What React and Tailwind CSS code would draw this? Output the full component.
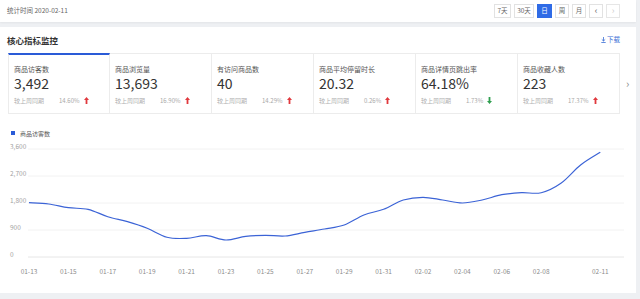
import React from 'react';

const metrics = [
  { label: '商品访客数', value: '3,492', rate: '14.60%', up: true, active: true },
  { label: '商品浏览量', value: '13,693', rate: '16.90%', up: true },
  { label: '有访问商品数', value: '40', rate: '14.29%', up: true },
  { label: '商品平均停留时长', value: '20.32', rate: '0.26%', up: true },
  { label: '商品详情页跳出率', value: '64.18%', rate: '1.73%', up: false },
  { label: '商品收藏人数', value: '223', rate: '17.37%', up: true },
];

const visitors = [
  1810, 1767, 1643, 1590, 1343, 1177, 957, 657, 623, 710, 567, 690, 723, 700, 823,
  933, 1067, 1400, 1590, 1900, 1990, 1900, 1800, 1900, 2077, 2143, 2143, 2457, 3067, 3492,
];

const xLabels = [
  [0, '01-13'], [2, '01-15'], [4, '01-17'], [6, '01-19'], [8, '01-21'], [10, '01-23'],
  [12, '01-25'], [14, '01-27'], [16, '01-29'], [18, '01-31'], [20, '02-02'], [22, '02-04'],
  [24, '02-06'], [26, '02-08'], [29, '02-11'],
];

const Arrow = ({ up }) => (
  <svg width="5" height="7" viewBox="0 0 5 7" className="ml-[4px]">
    {up ? (
      <path d="M2.5 0 L5 3 L3.4 3 L3.4 7 L1.6 7 L1.6 3 L0 3 Z" fill="#e0393e" />
    ) : (
      <path d="M2.5 7 L5 4 L3.4 4 L3.4 0 L1.6 0 L1.6 4 L0 4 Z" fill="#2f9e4f" />
    )}
  </svg>
);

const Chart = () => {
  const top = 11;
  const bottom = 119;
  const px = (i) => 29 + i * 19.7;
  const py = (v) => bottom - (v / 3600) * (bottom - top);
  const pts = visitors.map((v, i) => [px(i), py(v)]);

  let d = `M${pts[0][0]},${pts[0][1]}`;
  for (let i = 0; i < pts.length - 1; i++) {
    const p0 = pts[i - 1] || pts[i];
    const p1 = pts[i];
    const p2 = pts[i + 1];
    const p3 = pts[i + 2] || p2;
    const c1 = [p1[0] + (p2[0] - p0[0]) / 6, p1[1] + (p2[1] - p0[1]) / 6];
    const c2 = [p2[0] - (p3[0] - p1[0]) / 6, p2[1] - (p3[1] - p1[1]) / 6];
    d += ` C${c1[0]},${c1[1]} ${c2[0]},${c2[1]} ${p2[0]},${p2[1]}`;
  }

  const ticks = [3600, 2700, 1800, 900, 0];

  return (
    <svg width="636" height="145" className="block">
      {ticks.map((t) => (
        <g key={t}>
          <line x1="28" x2="624" y1={py(t)} y2={py(t)} stroke={t === 0 ? '#e6e6e6' : '#f2f2f2'} strokeWidth="1" />
          <text x="10" y={py(t) - 1.5} fontSize="6.5" fill="#a3a3a3" dominantBaseline="middle">
            {t.toLocaleString('en-US')}
          </text>
        </g>
      ))}
      {xLabels.map(([i, l]) => (
        <text key={l} x={px(i)} y="134" fontSize="6.5" fill="#8c8c8c" textAnchor="middle" dominantBaseline="middle">
          {l}
        </text>
      ))}
      <path d={d} fill="none" stroke="#3b63d6" strokeWidth="1.2" />
    </svg>
  );
};

export default function App() {
  const btns = [
    ['7天', 'w-[17px]'],
    ['30天', 'w-[20px]'],
    ['日', 'w-[15px]'],
    ['周', 'w-[14px]'],
    ['月', 'w-[14px]'],
    ['‹', 'w-[14px]'],
    ['›', 'w-[14px]'],
  ];

  return (
    <div className="w-[640px] h-[299px] overflow-hidden bg-[#eef0f3] font-['Noto_Sans_CJK_SC','Noto_Sans',sans-serif]">
      {/* top bar */}
      <div className="h-[22px] mr-[4px] bg-white flex items-center justify-between pl-[7px] pr-[16px] shadow-[0_1px_2px_rgba(0,0,0,0.05)]">
        <span className="text-[6.5px] text-[#666]">统计时间 2020-02-11</span>
        <div className="flex gap-[3px]">
          {btns.map(([t, w]) => (
            <div
              key={t}
              className={`${w} h-[14px] flex items-center justify-center text-[6.5px] border ${
                t === '日'
                  ? 'bg-[#2f6be6] border-[#2f6be6] text-white'
                  : t === '›'
                  ? 'border-[#e6e6e6] text-[#ccc] text-[9px]'
                  : t === '‹'
                  ? 'border-[#e2e2e2] text-[#666] text-[9px]'
                  : 'border-[#e2e2e2] text-[#666]'
              }`}
            >
              {t}
            </div>
          ))}
        </div>
      </div>

      {/* main card */}
      <div className="mt-[5px] mr-[4px] h-[266px] bg-white">
        <div className="h-[26px] flex items-center justify-between pl-[7px] pr-[16px]">
          <span className="text-[8.5px] font-bold text-[#333]">核心指标监控</span>
          <span className="flex items-center text-[6.5px] text-[#3b6fd6]">
            <svg width="5" height="6" viewBox="0 0 5 6" className="mr-[1px]">
              <path d="M2.5 0 V4 M0.8 2.4 L2.5 4 L4.2 2.4 M0.3 5.5 H4.7" stroke="#3b6fd6" strokeWidth="0.8" fill="none" />
            </svg>
            下载
          </span>
        </div>

        <div className="flex items-center">
          <div className="ml-[8px] flex">
            {metrics.map((m, i) => (
              <div
                key={m.label}
                className={`w-[102px] h-[61px] pl-[5px] flex flex-col border-b border-r border-[#ececec] ${
                  i === 0 ? 'border-l border-t-2 border-t-[#2a5bd7]' : 'border-t border-t-[#ececec]'
                }`}
              >
                <span className={`text-[7px] text-[#555] leading-none ${i === 0 ? 'mt-[11px]' : 'mt-[12px]'}`}>{m.label}</span>
                <span className="mt-[2px] text-[14px] leading-[17px] text-[#333]">{m.value}</span>
                <div className="mt-[5px] flex items-center text-[6px] text-[#b0b0b0] leading-none">
                  <span className="w-[45px]">较上周同期</span>
                  <span className="text-[#a8a8a8]">{m.rate}</span>
                  <Arrow up={m.up} />
                </div>
              </div>
            ))}
          </div>
          <span className="ml-[6px] text-[11px] text-[#888]">›</span>
        </div>

        <div className="mt-[14px] ml-[11px] flex items-center h-[10px]">
          <span className="w-[4px] h-[4px] bg-[#2a5bd7]" />
          <span className="ml-[5px] text-[6px] text-[#555]">商品访客数</span>
        </div>

        <Chart />
      </div>
    </div>
  );
}
